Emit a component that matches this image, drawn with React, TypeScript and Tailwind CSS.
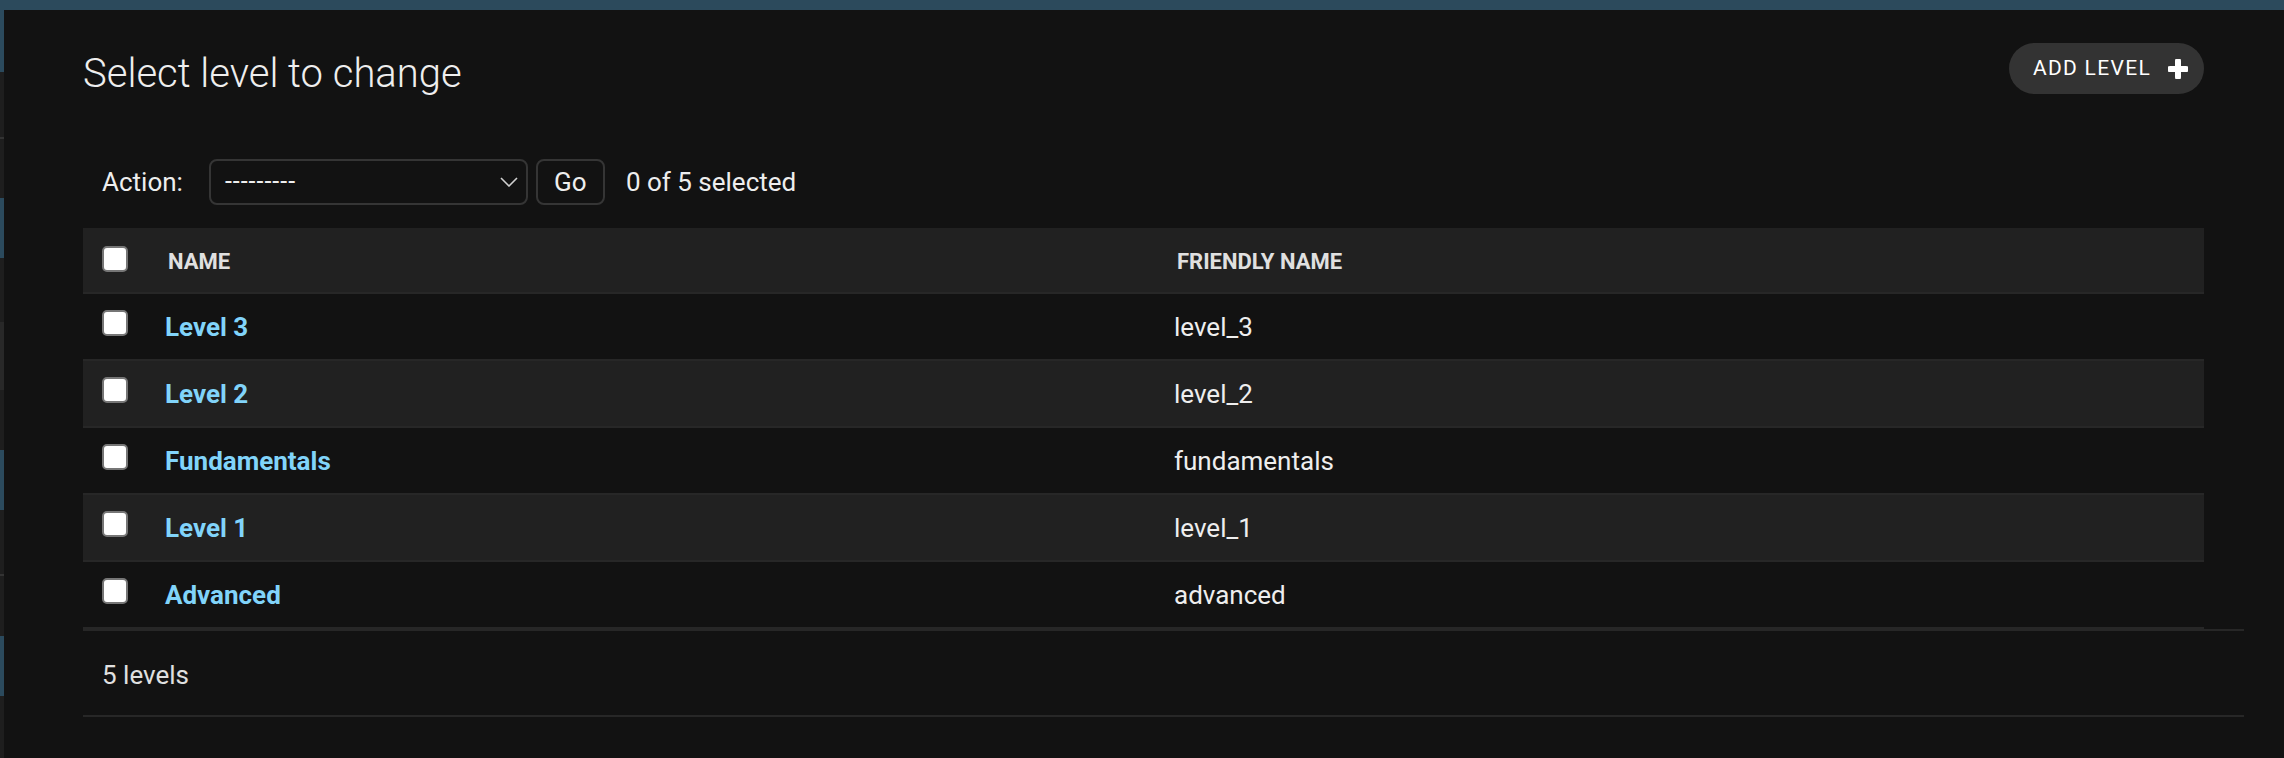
import React from 'react'

const rows = [
  { name: 'Level 3', friendly: 'level_3' },
  { name: 'Level 2', friendly: 'level_2' },
  { name: 'Fundamentals', friendly: 'fundamentals' },
  { name: 'Level 1', friendly: 'level_1' },
  { name: 'Advanced', friendly: 'advanced' },
]

// edge of the collapsed nav sidebar
const sideSegments = [
  { h: 'h-[62px]', c: 'bg-[#2b4a5d]' },
  { h: 'h-[65px]', c: 'bg-[#1e1e1e]' },
  { h: 'h-[2px]', c: 'bg-[#333333]' },
  { h: 'h-[59px]', c: 'bg-[#1e1e1e]' },
  { h: 'h-[60px]', c: 'bg-[#2b4a5d]' },
  { h: 'h-[64px]', c: 'bg-[#1e1e1e]' },
  { h: 'h-[68px]', c: 'bg-[#282828]' },
  { h: 'h-[60px]', c: 'bg-[#1e1e1e]' },
  { h: 'h-[60px]', c: 'bg-[#2b4a5d]' },
  { h: 'h-[64px]', c: 'bg-[#1e1e1e]' },
  { h: 'h-[2px]', c: 'bg-[#333333]' },
  { h: 'h-[60px]', c: 'bg-[#1e1e1e]' },
  { h: 'h-[60px]', c: 'bg-[#2b4a5d]' },
  { h: 'flex-1', c: 'bg-[#1e1e1e]' },
]

function Checkbox() {
  return <span className="block h-[26px] w-[26px] rounded-[5px] border-2 border-[#767676] bg-white" />
}

export default function App() {
  return (
    <div className="flex min-h-screen flex-col bg-[#121212] text-[#eeeeee]" style={{ fontFamily: 'Roboto, "Liberation Sans", sans-serif' }}>
      <div className="h-[10px] bg-[#2c4a5c]" />
      <div className="flex flex-1">
        <aside className="flex w-[4px] flex-col">
          {sideSegments.map((s, i) => (
            <div key={i} className={`${s.h} ${s.c}`} />
          ))}
        </aside>

        <main className="flex-1 pl-[79px] pr-[80px]">
          <div className="flex items-start justify-between pt-[33px]">
            <h1 className="mt-[7px] text-[40px] font-light leading-[48px] text-[#eeeeee]">Select level to change</h1>
            <button className="flex h-[51px] items-center rounded-full bg-[#333333] pl-[24px] pr-[16px] text-[21px] uppercase tracking-[1.3px] text-white">
              Add level
              <svg className="ml-[17px] h-[20px] w-[20px]" viewBox="0 0 20 20">
                <path d="M10 2v16M2 10h16" stroke="#fff" strokeWidth="6" strokeLinecap="round" />
              </svg>
            </button>
          </div>

          <div className="mt-[61px] flex h-[46px] items-center pl-[19px] text-[26px]">
            <span className="mr-[26px]">Action:</span>
            <div className="flex h-[46px] w-[319px] items-center justify-between rounded-[8px] border-2 border-[#353535] pl-[14px] pr-[8px]">
              <span className="text-[25px] tracking-[1px]">---------</span>
              <svg className="h-[10px] w-[18px]" viewBox="0 0 18 10" fill="none">
                <path d="M1 1l8 8 8-8" stroke="#d0d0d0" strokeWidth="1.6" />
              </svg>
            </div>
            <button className="ml-[8px] flex h-[46px] w-[69px] items-center justify-center rounded-[8px] border-2 border-[#353535] text-[26px]">
              Go
            </button>
            <span className="ml-[21px]">0 of 5 selected</span>
          </div>

          <div className="mt-[23px]">
            <div className="flex h-[66px] items-center border-b-2 border-[#272727] bg-[#212121]">
              <div className="w-[67px] pl-[19px]">
                <div className="-mt-[2px]">
                  <Checkbox />
                </div>
              </div>
              <div className="w-[1009px] pl-[18px] pt-[3px] text-[22px] font-bold uppercase text-[#e0e0e0]">Name</div>
              <div className="flex-1 pl-[18px] pt-[3px] text-[22px] font-bold uppercase text-[#e0e0e0]">Friendly name</div>
            </div>
            {rows.map((r, i) => (
              <div
                key={r.name}
                className={`flex h-[67px] items-center border-b-2 border-[#272727] text-[26px] ${i % 2 === 1 ? 'bg-[#212121]' : 'bg-[#121212]'}`}
              >
                <div className="w-[67px] pl-[19px]">
                  <div className="-mt-[8px]">
                    <Checkbox />
                  </div>
                </div>
                <div className="w-[1009px] pl-[15px] pt-[1px]">
                  <a className="font-bold text-[#81d4fa]">{r.name}</a>
                </div>
                <div className="flex-1 pl-[15px] pt-[1px]">{r.friendly}</div>
              </div>
            ))}
          </div>

          <div className="-mr-[40px] flex h-[88px] items-center border-y-2 border-[#272727] pl-[19px] pt-[4px] text-[26px] text-[#e0e0e0]">
            5 levels
          </div>
        </main>
      </div>
    </div>
  )
}
